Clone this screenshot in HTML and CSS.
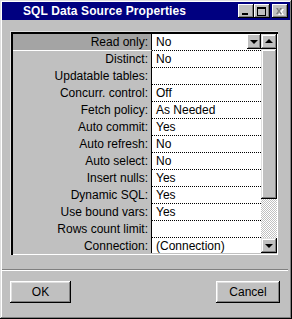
FILE: index.html
```html
<html lang="en">
<head>
    <meta charset="UTF-8">
    <title>SQL Data Source Properties</title>
    <link rel="stylesheet" href="styles.css">
</head>
<body>
    <div class="window">
        <div class="titlebar">
            <span class="title">SQL Data Source Properties</span>
            <div class="title-buttons">
                <span class="tbtn min"><i></i></span>
                <span class="tbtn max"><i></i></span>
                <span class="tbtn close">
                    <svg width="8" height="7" viewBox="0 0 8 7">
                        <path d="M1 1h2v1h1v1h1v-1h1v-1h2M1 1" fill="none"/>
                        <path d="M1 0h2l1 2 1-2h2l-2 3 2 3h-2l-1-2-1 2h-2l2-3z" fill="#fff" transform="translate(1 1)"/>
                        <path d="M0 0h2l1 2 1-2h2l-2 3 2 3h-2l-1-2-1 2h-2l2-3z" fill="#808080"/>
                    </svg>
                </span>
            </div>
        </div>

        <div class="grid">
            <div class="props">
                <div class="row selected">
                    <div class="label">Read only:</div>
                    <div class="value"><span class="text">No</span><span class="drop"><i class="arrow-down"></i></span></div>
                </div>
                <div class="row"><div class="label">Distinct:</div><div class="value">No</div></div>
                <div class="row"><div class="label">Updatable tables:</div><div class="value"></div></div>
                <div class="row"><div class="label">Concurr. control:</div><div class="value">Off</div></div>
                <div class="row"><div class="label">Fetch policy:</div><div class="value">As Needed</div></div>
                <div class="row"><div class="label">Auto commit:</div><div class="value">Yes</div></div>
                <div class="row"><div class="label">Auto refresh:</div><div class="value">No</div></div>
                <div class="row"><div class="label">Auto select:</div><div class="value">No</div></div>
                <div class="row"><div class="label">Insert nulls:</div><div class="value">Yes</div></div>
                <div class="row"><div class="label">Dynamic SQL:</div><div class="value">Yes</div></div>
                <div class="row"><div class="label">Use bound vars:</div><div class="value">Yes</div></div>
                <div class="row"><div class="label">Rows count limit:</div><div class="value"></div></div>
                <div class="row last"><div class="label">Connection:</div><div class="value">(Connection)</div></div>
            </div>
            <div class="scrollbar">
                <span class="sbtn"><i class="arrow-up"></i></span>
                <span class="thumb"></span>
                <span class="track"></span>
                <span class="sbtn"><i class="arrow-down"></i></span>
            </div>
        </div>

        <div class="separator"></div>

        <div class="actions">
            <button class="btn ok">OK</button>
            <button class="btn cancel">Cancel</button>
        </div>
    </div>
</body>
</html>
```

FILE: styles.css
```css
body {
    margin: 0;
    background-color: #c0c0c0;
    font-family: 'Liberation Sans', Arial, sans-serif;
    font-size: 12px;
    color: #000;
}

.window {
    width: 292px;
    height: 319px;
    box-sizing: border-box;
    padding: 2px;
    background-color: #c0c0c0;
    box-shadow: inset -1px -1px #000, inset 1px 1px #dfdfdf, inset -2px -2px #808080, inset 2px 2px #fff;
}

.titlebar {
    height: 18px;
    background-color: #000080;
    display: flex;
    align-items: center;
    justify-content: space-between;
    padding: 0 2px 0 21px;
}

.title {
    color: #fff;
    font-weight: bold;
    font-size: 12px;
    letter-spacing: 0.1px;
}

.title-buttons {
    display: flex;
}

.tbtn {
    width: 16px;
    height: 14px;
    box-sizing: border-box;
    background-color: #c0c0c0;
    box-shadow: inset -1px -1px #000, inset 1px 1px #fff, inset -2px -2px #808080;
    display: flex;
    align-items: center;
    justify-content: center;
}

.tbtn.close {
    margin-left: 2px;
}

.min i {
    width: 6px;
    height: 2px;
    background: #000;
    margin-top: 6px;
    margin-right: 2px;
}

.max i {
    width: 9px;
    height: 9px;
    box-sizing: border-box;
    border: 1px solid #000;
    border-top-width: 2px;
    margin-right: 1px;
}

.close svg {
    margin-right: 1px;
}

.grid {
    width: 268px;
    height: 224px;
    box-sizing: border-box;
    margin: 11px 0 0 8px;
    display: flex;
    box-shadow: inset 1px 1px #dfdfdf, inset 2px 2px #000, inset 3px 3px #000, inset -1px -1px #fff;
    padding: 3px 1px 1px 3px;
}

.props {
    flex: 1;
    height: 219px;
    overflow: hidden;
}

.row {
    display: flex;
    height: 17px;
    line-height: 16px;
}

.label {
    width: 139px;
    box-sizing: border-box;
    border-right: 1px solid #000;
    text-align: right;
    padding-right: 3px;
    white-space: nowrap;
}

.row.selected .label {
    background-color: #a4a4a4;
    border-bottom: 1px solid #fff;
}

.value {
    flex: 1;
    display: flex;
    background-color: #fff;
    padding-left: 4px;
    background-image: linear-gradient(to right, #000 50%, transparent 50%);
    background-size: 2px 1px;
    background-repeat: repeat-x;
    background-position: left bottom;
}

.row.last .value {
    background-image: none;
}

.value .text {
    flex: 1;
}

.drop {
    width: 14px;
    height: 15px;
    box-sizing: border-box;
    margin-top: 0;
    background-color: #c0c0c0;
    box-shadow: inset -1px -1px #000, inset 1px 1px #fff, inset -2px -2px #808080;
    display: flex;
    align-items: center;
    justify-content: center;
}

.arrow-down,
.arrow-up {
    width: 0;
    height: 0;
    border-left: 4px solid transparent;
    border-right: 4px solid transparent;
}

.arrow-down {
    border-top: 4px solid #000;
    margin-top: 1px;
}

.arrow-up {
    border-bottom: 4px solid #000;
    margin-bottom: 1px;
}

.scrollbar {
    width: 16px;
    height: 219px;
    display: flex;
    flex-direction: column;
}

.sbtn,
.thumb {
    box-sizing: border-box;
    background-color: #c0c0c0;
    box-shadow: inset -1px -1px #000, inset 1px 1px #dfdfdf, inset -2px -2px #808080, inset 2px 2px #fff;
}

.sbtn {
    height: 15px;
    display: flex;
    align-items: center;
    justify-content: center;
}

.thumb {
    height: 150px;
}

.track {
    flex: 1;
    background-image: repeating-conic-gradient(#fff 0 25%, #c0c0c0 0 50%);
    background-size: 2px 2px;
}

.separator {
    margin: 14px 2px 0 0;
    border-top: 1px solid #808080;
    border-bottom: 1px solid #fff;
}

.actions {
    display: flex;
    justify-content: space-between;
    margin: 10px 10px 0 8px;
}

.btn {
    height: 22px;
    border: none;
    background-color: #c0c0c0;
    font-family: 'Liberation Sans', Arial, sans-serif;
    font-size: 12px;
    color: #000;
    padding: 0;
    box-shadow: inset -1px -1px #000, inset 1px 1px #fff, inset -2px -2px #808080, inset 2px 2px #dfdfdf;
}

.btn.ok {
    width: 61px;
}

.btn.cancel {
    width: 64px;
}
```
